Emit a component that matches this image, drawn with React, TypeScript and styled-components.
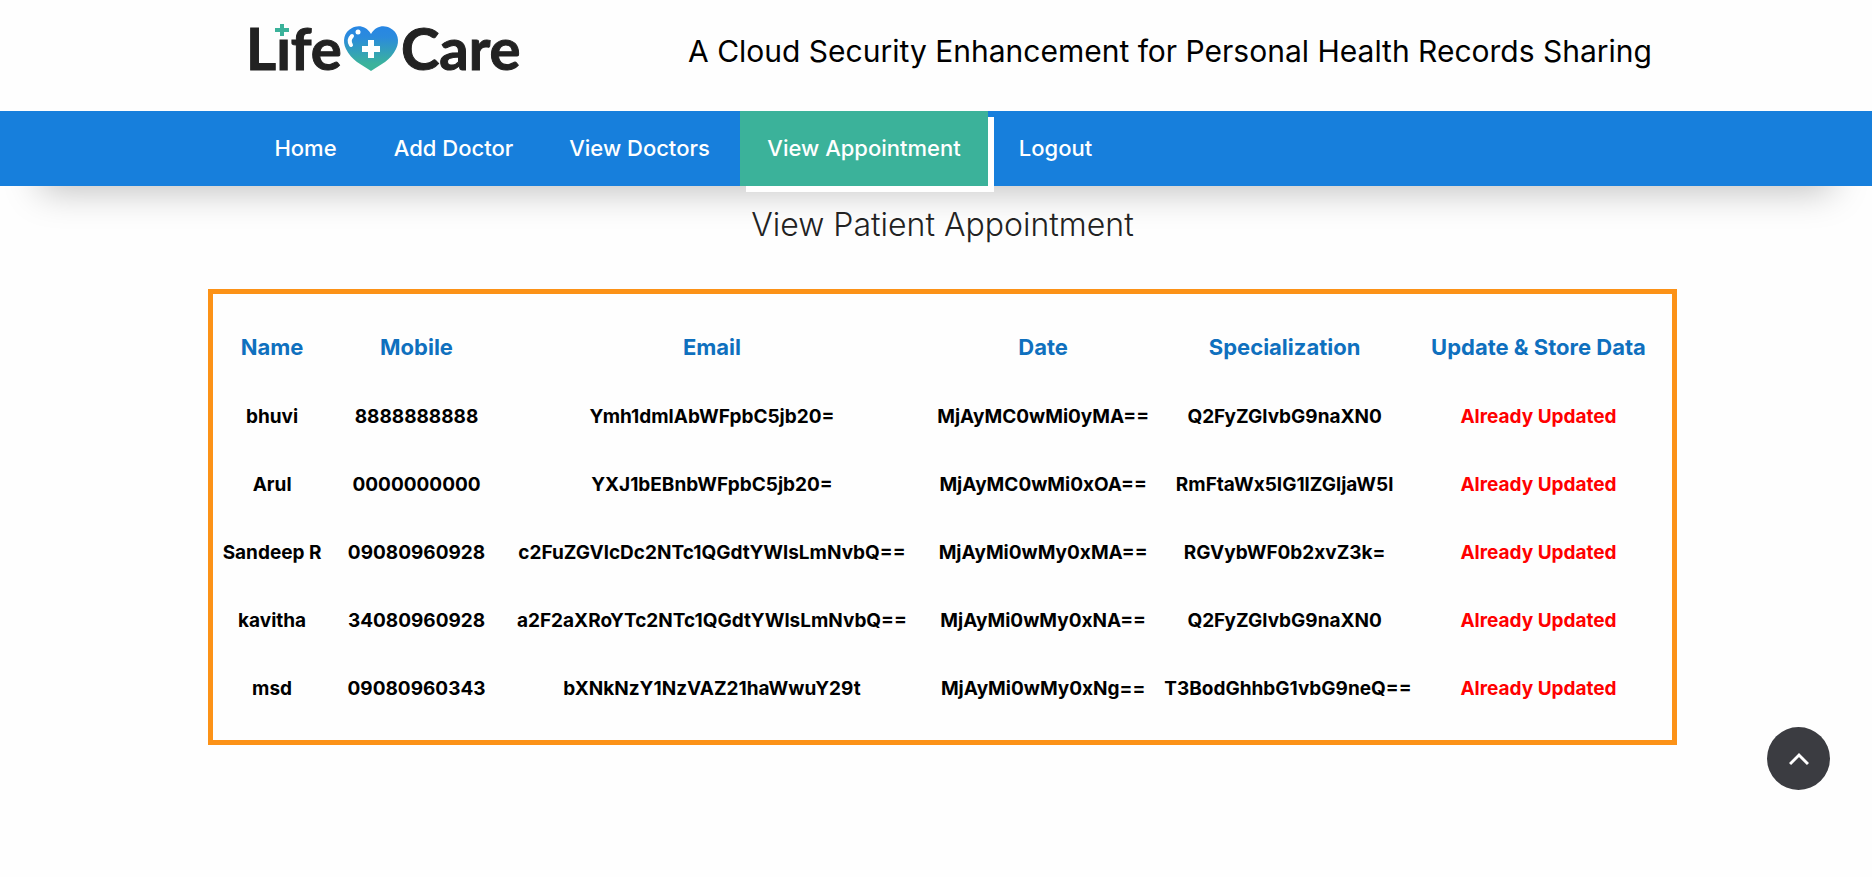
import React from "react";
import styled, { createGlobalStyle } from "styled-components";

const GlobalStyle = createGlobalStyle`
  *, *::before, *::after { box-sizing: border-box; }
  body {
    margin: 0;
    background: #fefefe;
    color: #222222;
    font-family: Inter, "Liberation Sans", sans-serif;
  }
`;

const Page = styled.div`
  min-height: 100vh;
`;

const Container = styled.div`
  width: 75%;
  margin: 0 auto;
  padding: 0 15px;
`;

const Header = styled.header`
  box-shadow: 0 45px 36px -40px rgba(0, 0, 0, 0.25);
`;

const HeaderRow = styled(Container)`
  display: flex;
  align-items: center;
  gap: 159px;
  height: 111px;
  padding-bottom: 9px;
`;

const LogoLink = styled.a`
  display: block;
  flex: none;
  margin-left: -8px;
`;

const LogoSvg = styled.svg`
  display: block;
`;

const SiteTitle = styled.h1`
  margin: 0;
  color: #000000;
  font-size: 30px;
  font-weight: 400;
  line-height: 40px;
  white-space: nowrap;
`;

const NavBar = styled.nav`
  background: #177fdc;
`;

const NavList = styled.ul`
  display: grid;
  grid-template-columns: 113px 171px 189px 248px 123px;
  gap: 6px;
  margin: 0;
  padding: 0;
  list-style: none;
`;

const NavLink = styled.a<{ $active?: boolean }>`
  display: block;
  color: #ffffff;
  background: ${(p) => (p.$active ? "#3bb29a" : "transparent")};
  box-shadow: ${(p) => (p.$active ? "6px 6px 0 #ffffff" : "none")};
  font-size: 22px;
  font-weight: 500;
  line-height: 75px;
  text-align: center;
  text-decoration: none;
  white-space: nowrap;
`;

const Main = styled.main`
  padding: 19px 195px 0 208px;
`;

const PageTitle = styled.h2`
  margin: 0 0 44px;
  font-size: 32px;
  font-weight: 300;
  line-height: 40px;
  text-align: center;
`;

const TablePanel = styled.section`
  padding: 17px 0 18px;
  border: 5px solid #fc9217;
`;

const Table = styled.table`
  width: 100%;
  border-collapse: collapse;
  table-layout: fixed;
`;

const HeadCell = styled.th<{ $width: string }>`
  width: ${(p) => p.$width};
  height: 71px;
  padding: 0;
  color: #0f70be;
  font-size: 22px;
  font-weight: 700;
  white-space: nowrap;
`;

const Cell = styled.td<{ $alert?: boolean }>`
  height: 68px;
  padding: 0;
  color: ${(p) => (p.$alert ? "#ff0000" : "#000000")};
  font-size: 19px;
  font-weight: 700;
  text-align: center;
  white-space: nowrap;
`;

const TopButton = styled.button`
  position: fixed;
  right: 42px;
  bottom: 87px;
  display: flex;
  align-items: center;
  justify-content: center;
  width: 63px;
  height: 63px;
  padding: 0;
  border: 0;
  border-radius: 50%;
  background: #3b3c41;
  cursor: pointer;
`;

const navItems = ["Home", "Add Doctor", "View Doctors", "View Appointment", "Logout"];

const columns = [
  { label: "Name", width: "8.1%" },
  { label: "Mobile", width: "11.7%" },
  { label: "Email", width: "28.8%" },
  { label: "Date", width: "16.6%" },
  { label: "Specialization", width: "16.5%" },
  { label: "Update & Store Data", width: "18.3%" },
];

const appointments = [
  ["bhuvi", "8888888888", "Ymh1dmlAbWFpbC5jb20=", "MjAyMC0wMi0yMA==", "Q2FyZGlvbG9naXN0"],
  ["Arul", "0000000000", "YXJ1bEBnbWFpbC5jb20=", "MjAyMC0wMi0xOA==", "RmFtaWx5IG1lZGljaW5l"],
  ["Sandeep R", "09080960928", "c2FuZGVlcDc2NTc1QGdtYWlsLmNvbQ==", "MjAyMi0wMy0xMA==", "RGVybWF0b2xvZ3k="],
  ["kavitha", "34080960928", "a2F2aXRoYTc2NTc1QGdtYWlsLmNvbQ==", "MjAyMi0wMy0xNA==", "Q2FyZGlvbG9naXN0"],
  ["msd", "09080960343", "bXNkNzY1NzVAZ21haWwuY29t", "MjAyMi0wMy0xNg==", "T3BodGhhbG1vbG9neQ=="],
];

function Logo() {
  return (
    <LogoSvg width="288" height="80" viewBox="-8 -9 288 80" role="img" aria-label="Life Care">
      <defs>
        <linearGradient id="heart" x1="0" y1="0" x2="0" y2="1">
          <stop offset="0" stopColor="#2786e4" />
          <stop offset="0.25" stopColor="#2b8bdc" />
          <stop offset="0.85" stopColor="#3bb39b" />
          <stop offset="1" stopColor="#3bb39b" />
        </linearGradient>
      </defs>
      <g fill="#222222" stroke="#222222" fontFamily="Lato, sans-serif" fontSize="58" fontWeight="700">
        <text x="-3" y="50">Life</text>
        <text x="152" y="50">Care</text>
      </g>
      <rect x="26" y="2" width="14" height="15" fill="#fefefe" />
      <path d="M31 4h4v4h5v4h-5v4h-4v-4h-5V8h5z" fill="#3bb29a" />
      <path
        d="M122 14c5-9 14-9 19-6 8 4 10 13 6 21-5 11-16 16-25 22-9-6-20-11-25-22-4-8-2-17 6-21 5-3 14-3 19 6z"
        fill="url(#heart)"
      />
      <path d="M119 20h6v6h6v6h-6v6h-6v-6h-6v-6h6z" fill="#ffffff" />
      <circle cx="109" cy="12" r="2.5" fill="#ffffff" />
      <path d="M103 16q-4 4-1 9" fill="none" stroke="#ffffff" strokeWidth="4" strokeLinecap="round" />
    </LogoSvg>
  );
}

export default function App() {
  return (
    <Page>
      <GlobalStyle />
      <Header>
        <HeaderRow>
          <LogoLink href="#">
            <Logo />
          </LogoLink>
          <SiteTitle>A Cloud Security Enhancement for Personal Health Records Sharing</SiteTitle>
        </HeaderRow>
        <NavBar>
          <Container>
            <NavList>
              {navItems.map((item) => (
                <li key={item}>
                  <NavLink href="#" $active={item === "View Appointment"}>
                    {item}
                  </NavLink>
                </li>
              ))}
            </NavList>
          </Container>
        </NavBar>
      </Header>
      <Main>
        <PageTitle>View Patient Appointment</PageTitle>
        <TablePanel>
          <Table>
            <thead>
              <tr>
                {columns.map((c) => (
                  <HeadCell key={c.label} scope="col" $width={c.width}>
                    {c.label}
                  </HeadCell>
                ))}
              </tr>
            </thead>
            <tbody>
              {appointments.map((row) => (
                <tr key={row[0]}>
                  {row.map((value, i) => (
                    <Cell key={i}>{value}</Cell>
                  ))}
                  <Cell $alert>Already Updated</Cell>
                </tr>
              ))}
            </tbody>
          </Table>
        </TablePanel>
      </Main>
      <TopButton type="button" aria-label="Back to top">
        <svg width="20" height="16" viewBox="0 0 20 16" fill="none" stroke="#ffffff" strokeWidth="3" aria-hidden="true">
          <path d="M1 13l9-9 9 9" />
        </svg>
      </TopButton>
    </Page>
  );
}
